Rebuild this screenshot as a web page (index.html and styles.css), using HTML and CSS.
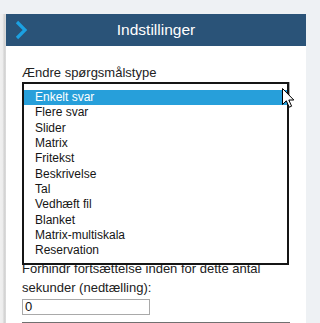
FILE: index.html
```html
<!DOCTYPE html>
<html lang="da">
<head>
<meta charset="utf-8">
<title>Indstillinger</title>
<link rel="stylesheet" href="styles.css">
</head>
<body>
<div class="page">
  <div class="strip"></div>
  <div class="panel">
    <div class="header">
      <svg class="chevron" width="14" height="20" viewBox="0 0 14 20"><polyline points="2,2 10,10 2,18" fill="none" stroke="#1ba1e2" stroke-width="3.2"/></svg>
      <div class="title">Indstillinger</div>
      <div></div>
    </div>
    <div class="body">
      <div class="label">Ændre spørgsmålstype</div>
      <div class="select"></div>
      <div class="filler"></div>
      <div class="text">Forhindr fortsættelse inden for dette antal sekunder (nedtælling):</div>
      <div class="input">0</div>
      <div class="rule"></div>
    </div>
    <ul class="popup">
      <li class="item selected">Enkelt svar</li>
      <li class="item">Flere svar</li>
      <li class="item">Slider</li>
      <li class="item">Matrix</li>
      <li class="item">Fritekst</li>
      <li class="item">Beskrivelse</li>
      <li class="item">Tal</li>
      <li class="item">Vedhæft fil</li>
      <li class="item">Blanket</li>
      <li class="item">Matrix-multiskala</li>
      <li class="item">Reservation</li>
    </ul>
    <svg class="cursor" width="13" height="20" viewBox="0 0 13 20"><path d="M0.5 0.5 L0.5 16.5 L4.3 12.8 L7.2 19.2 L9.6 18.2 L6.8 12 L11.8 12 Z" fill="#fff" stroke="#000" stroke-width="1" stroke-linejoin="miter"/></svg>
  </div>
</div>
</body>
</html>
```
FILE: styles.css
```css
html, body {
  margin: 0;
  padding: 0;
  background: #eef1f4;
  font-family: "Liberation Sans", Arial, sans-serif;
  overflow: hidden;
}
.page {
  display: flex;
  padding-top: 14px;
  height: 309px;
}
.strip {
  width: 6px;
  background: linear-gradient(to right, #f0f0f0 0%, #ececec 45%, #d2d2d2 70%, #dcdcdc 100%);
}
.panel {
  position: relative;
  width: 300px;
  background: #fff;
}
.header {
  height: 32px;
  background: #2a5378;
  display: grid;
  grid-template-columns: 1fr auto 1fr;
  align-items: center;
}
.chevron {
  margin-left: 9px;
  display: block;
}
.title {
  color: #fff;
  font-size: 15.5px;
  line-height: 32px;
}
.body {
  padding: 17px 16px 0 16px;
  color: #222;
  font-size: 13px;
  line-height: 19px;
}
.select {
  height: 22px;
  box-sizing: border-box;
  border: 1px solid #a9a9a9;
}
.filler {
  height: 155px;
}
.text {
  color: #222;
}
.input {
  box-sizing: border-box;
  width: 128px;
  height: 16px;
  margin-top: 2px;
  border: 1px solid #a9a9a9;
  padding-left: 2px;
  line-height: 14px;
  color: #111;
}
.rule {
  margin-top: 7px;
  height: 1px;
  background: #707070;
}
.popup {
  position: absolute;
  left: 16px;
  top: 68px;
  width: 267px;
  height: 183px;
  box-sizing: border-box;
  margin: 0;
  padding: 6px 0 0 0;
  list-style: none;
  background: #fff;
  border: 2px solid #151515;
}
.item {
  font-size: 12px;
  line-height: 15.33px;
  height: 15.33px;
  padding-left: 11px;
  color: #151515;
}
.item.selected {
  background: #279fda;
  color: #fff;
}
.cursor {
  position: absolute;
  left: 276px;
  top: 74px;
}
```
